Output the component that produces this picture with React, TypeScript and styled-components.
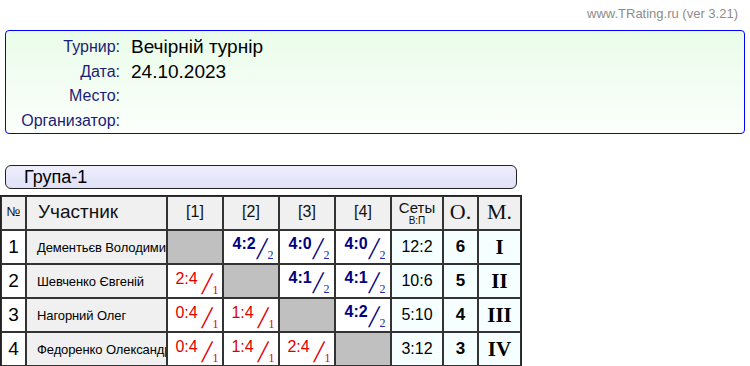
import styled, { createGlobalStyle } from "styled-components";

const GlobalStyle = createGlobalStyle`
  html, body {
    margin: 0;
    padding: 0;
    background: #fff;
    font-family: "Liberation Sans", Arial, sans-serif;
  }
`;

type Cell = { score: string; pts: number; win: boolean } | null;

const players: {
  name: string;
  cells: Cell[];
  sets: string;
  points: number;
  place: string;
}[] = [
  {
    name: "Дементьєв Володимир",
    cells: [
      null,
      { score: "4:2", pts: 2, win: true },
      { score: "4:0", pts: 2, win: true },
      { score: "4:0", pts: 2, win: true },
    ],
    sets: "12:2",
    points: 6,
    place: "I",
  },
  {
    name: "Шевченко Євгеній",
    cells: [
      { score: "2:4", pts: 1, win: false },
      null,
      { score: "4:1", pts: 2, win: true },
      { score: "4:1", pts: 2, win: true },
    ],
    sets: "10:6",
    points: 5,
    place: "II",
  },
  {
    name: "Нагорний Олег",
    cells: [
      { score: "0:4", pts: 1, win: false },
      { score: "1:4", pts: 1, win: false },
      null,
      { score: "4:2", pts: 2, win: true },
    ],
    sets: "5:10",
    points: 4,
    place: "III",
  },
  {
    name: "Федоренко Олександр",
    cells: [
      { score: "0:4", pts: 1, win: false },
      { score: "1:4", pts: 1, win: false },
      { score: "2:4", pts: 1, win: false },
      null,
    ],
    sets: "3:12",
    points: 3,
    place: "IV",
  },
];

export default function App() {
  return (
    <Page>
      <GlobalStyle />
      <Credit>www.TRating.ru (ver 3.21)</Credit>
      <InfoBox>
        <InfoRow>
          <Label>Турнир:</Label>
          <Value>Вечірній турнір</Value>
        </InfoRow>
        <InfoRow>
          <Label>Дата:</Label>
          <Value>24.10.2023</Value>
        </InfoRow>
        <InfoRow>
          <Label>Место:</Label>
          <Value />
        </InfoRow>
        <InfoRow>
          <Label>Организатор:</Label>
          <Value />
        </InfoRow>
      </InfoBox>

      <GroupTitle>Група-1</GroupTitle>

      <Table>
        <colgroup>
          <col style={{ width: 25 }} />
          <col style={{ width: 141 }} />
          <col style={{ width: 56 }} />
          <col style={{ width: 56 }} />
          <col style={{ width: 56 }} />
          <col style={{ width: 56 }} />
          <col style={{ width: 52 }} />
          <col style={{ width: 35 }} />
          <col style={{ width: 43 }} />
        </colgroup>
        <thead>
          <tr>
            <HeadCell $size={13}>№</HeadCell>
            <HeadCell $size={19} $left>
              Участник
            </HeadCell>
            {[1, 2, 3, 4].map((n) => (
              <HeadCell key={n} $size={16}>
                [{n}]
              </HeadCell>
            ))}
            <HeadCell $size={15}>
              <SetsHead>
                Сеты
                <small>В:П</small>
              </SetsHead>
            </HeadCell>
            <HeadCell $size={22} $serif>
              О.
            </HeadCell>
            <HeadCell $size={22} $serif>
              М.
            </HeadCell>
          </tr>
        </thead>
        <tbody>
          {players.map((p, i) => (
            <tr key={p.name}>
              <NumCell>{i + 1}</NumCell>
              <NameCell>{p.name}</NameCell>
              {p.cells.map((c, j) =>
                c ? (
                  <ScoreCell key={j}>
                    <ScoreBox $win={c.win}>
                      <Result $win={c.win}>{c.score}</Result>
                      <Slash $win={c.win}>╱</Slash>
                      <Pts $win={c.win}>{c.pts}</Pts>
                    </ScoreBox>
                  </ScoreCell>
                ) : (
                  <DiagCell key={j} />
                )
              )}
              <StatCell $size={16}>{p.sets}</StatCell>
              <StatCell $size={17} $bold>
                {p.points}
              </StatCell>
              <StatCell $size={21} $bold $serif>
                {p.place}
              </StatCell>
            </tr>
          ))}
        </tbody>
      </Table>
    </Page>
  );
}

const Page = styled.div`
  width: 750px;
  height: 366px;
  overflow: hidden;
`;

const Credit = styled.div`
  height: 30px;
  line-height: 27px;
  padding-right: 12px;
  text-align: right;
  font-size: 13px;
  color: #8c8c8c;
`;

const InfoBox = styled.div`
  box-sizing: border-box;
  margin: 0 5px;
  height: 104px;
  padding: 4px 0 0;
  border: 1px solid #0000ff;
  border-radius: 4px;
  background: linear-gradient(#e9fce9, #fcfffc);
`;

const InfoRow = styled.div`
  display: grid;
  grid-template-columns: 114px 1fr;
  column-gap: 11px;
  align-items: center;
  height: 24.5px;
`;

const Label = styled.span`
  text-align: right;
  font-size: 16px;
  color: #1c1c78;
`;

const Value = styled.span`
  font-size: 19px;
  color: #000;
`;

const GroupTitle = styled.div`
  box-sizing: border-box;
  margin: 31px 0 6px 5px;
  width: 512px;
  height: 24px;
  padding-left: 18px;
  line-height: 22px;
  font-size: 18px;
  color: #000;
  border: 1px solid #222;
  border-radius: 6px;
  background: linear-gradient(#eeeefc, #e0e0f8);
`;

const Table = styled.table`
  border-collapse: separate;
  border-spacing: 0;
  table-layout: fixed;
  width: 522px;
  border: 1px solid #222;

  td,
  th {
    box-sizing: border-box;
    height: 34px;
    border: 1px solid #333;
    padding: 0;
  }
`;

const HeadCell = styled.th<{ $size: number; $left?: boolean; $serif?: boolean }>`
  background: #f0f0f0;
  font-weight: normal;
  color: #111;
  font-size: ${(p) => p.$size}px;
  text-align: ${(p) => (p.$left ? "left" : "center")};
  padding-left: ${(p) => (p.$left ? "11px" : "0")} !important;
  padding-bottom: 3px !important;
  font-family: ${(p) =>
    p.$serif ? '"Liberation Serif", "Times New Roman", serif' : "inherit"};
`;

const SetsHead = styled.div`
  display: flex;
  flex-direction: column;
  align-items: center;
  line-height: 15px;
  padding-top: 2px;

  small {
    font-size: 10px;
    line-height: 11px;
  }
`;

const NumCell = styled.td`
  background: #fff;
  text-align: center;
  font-size: 19px;
`;

const NameCell = styled.td`
  background: #f0f0f0;
  font-size: 13px;
  letter-spacing: -0.1px;
  padding-left: 10px !important;
  white-space: nowrap;
  overflow: hidden;
`;

const DiagCell = styled.td`
  background: #c0c0c0;
`;

const ScoreCell = styled.td`
  background: #fff;
  text-align: center;
  white-space: nowrap;
  vertical-align: middle;
`;

const ScoreBox = styled.div<{ $win: boolean }>`
  display: inline-flex;
  align-items: flex-start;
  height: 22px;
  padding-top: ${(p) => (p.$win ? "0" : "3px")};
  margin-left: 4px;
  color: ${(p) => (p.$win ? "#000080" : "#e00000")};
`;

const Result = styled.span<{ $win: boolean }>`
  font-size: 16px;
  line-height: 14px;
  font-weight: ${(p) => (p.$win ? "bold" : "normal")};
`;

const Slash = styled.span<{ $win: boolean }>`
  margin: 2px 0 0 ${(p) => (p.$win ? "1px" : "4px")};
  font-family: "DejaVu Sans", sans-serif;
  font-size: 18px;
  line-height: 20px;
`;

const Pts = styled.span<{ $win: boolean }>`
  align-self: flex-end;
  margin: 0 0 -1px 0;
  font-size: 12px;
  line-height: 10px;
  font-family: "Liberation Serif", serif;
  color: ${(p) => (p.$win ? "#2828a8" : "#e00000")};
`;

const StatCell = styled.td<{ $size: number; $bold?: boolean; $serif?: boolean }>`
  background: #f5ffff;
  text-align: center;
  font-size: ${(p) => p.$size}px;
  font-weight: ${(p) => (p.$bold ? "bold" : "normal")};
  font-family: ${(p) =>
    p.$serif ? '"Liberation Serif", "Times New Roman", serif' : "inherit"};
`;
